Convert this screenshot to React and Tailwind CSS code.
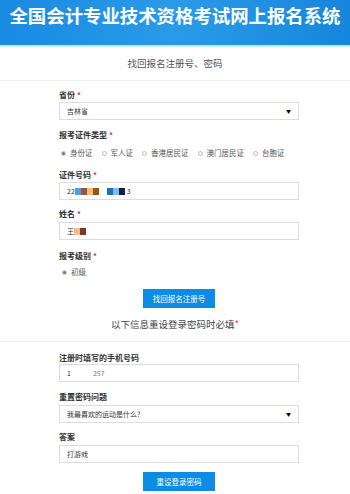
import React from "react";

const font = { fontFamily: '"Noto Sans CJK SC", "Noto Sans", sans-serif' };

function Label({ children, required, className = "" }) {
  return (
    <div className={`text-[8px] leading-[10px] font-bold text-[#333] ${className}`}>
      {children}
      {required && <span className="text-red-500 ml-[2px]">*</span>}
    </div>
  );
}

function Field({ children, className = "" }) {
  return (
    <div
      className={`h-[18px] border border-[#dcdcdc] bg-white flex items-center px-[7px] text-[7px] text-[#333] whitespace-nowrap ${className}`}
    >
      {children}
    </div>
  );
}

function Select({ value, className = "" }) {
  return (
    <Field className={`justify-between ${className}`}>
      <span>{value}</span>
      <span className="text-[5px] text-black">▼</span>
    </Field>
  );
}

function Radio({ label, checked }) {
  return (
    <label className="flex items-center gap-[4px] text-[7.5px] leading-[10px] text-[#555] whitespace-nowrap shrink-0">
      <span className="w-[5px] h-[5px] rounded-full border border-[#bbb] flex items-center justify-center">
        {checked && <span className="w-[3px] h-[3px] rounded-full bg-[#777]" />}
      </span>
      {label}
    </label>
  );
}

function Block({ c }) {
  return <span className="inline-block w-[6px] h-[7px]" style={{ background: c }} />;
}

export default function App() {
  return (
    <div className="w-[350px] h-[494px] bg-white overflow-hidden" style={font}>
      <div className="h-[45px] bg-gradient-to-r from-[#1a8ae2] via-[#2a9ae8] to-[#1686dc] flex items-start justify-center pt-[4px]">
        <h1 className="text-white text-[18.4px] font-bold leading-[22px] whitespace-nowrap">
          全国会计专业技术资格考试网上报名系统
        </h1>
      </div>
      <div className="h-[2px] bg-[#cfe6f8]" />

      <div className="h-[34px] border-b border-[#eee] flex items-center justify-center text-[9.5px] text-[#555]">
        找回报名注册号、密码
      </div>

      <div className="pl-[59px] pr-[51px] pt-[9px]">
        <Label required>省份</Label>
        <Select value="吉林省" className="mt-[2px]" />

        <Label required className="mt-[10px]">报考证件类型</Label>
        <div className="flex gap-[9px] mt-[8px] pl-[2px]">
          <Radio label="身份证" checked />
          <Radio label="军人证" />
          <Radio label="香港居民证" />
          <Radio label="澳门居民证" />
          <Radio label="台胞证" />
        </div>

        <Label required className="mt-[12px]">证件号码</Label>
        <Field className="mt-[2px]">
          <span>22</span>
          <Block c="#4ba3e3" />
          <Block c="#a0533a" />
          <Block c="#f5b97a" />
          <Block c="#a4500f" />
          <span className="w-[8px]" />
          <Block c="#1a70c7" />
          <Block c="#7cbcee" />
          <Block c="#0d2347" />
          <span className="ml-[2px]">3</span>
        </Field>

        <Label required className="mt-[9px]">姓名</Label>
        <Field className="mt-[3px]">
          <span>王</span>
          <Block c="#f5bd82" />
          <Block c="#7a3a2e" />
        </Field>

        <Label required className="mt-[11px]">报考级别</Label>
        <div className="mt-[6px] pl-[3px]">
          <Radio label="初级" checked />
        </div>

        <div className="flex justify-center mt-[12px] pr-[-8px]">
          <button className="w-[72px] h-[19px] bg-[#0e8ce4] text-white text-[7.5px]">
            找回报名注册号
          </button>
        </div>
      </div>

      <div className="h-[34px] border-b border-[#eee] flex items-center justify-center text-[9.5px] text-[#444]">
        以下信息重设登录密码时必填<span className="text-red-500">*</span>
      </div>

      <div className="pl-[59px] pr-[51px] pt-[11px]">
        <Label>注册时填写的手机号码</Label>
        <Field className="mt-[1px]">
          <span>1</span>
          <span className="ml-[22px] text-[#777]">257</span>
        </Field>

        <Label className="mt-[10px]">重置密码问题</Label>
        <Select value="我最喜欢的运动是什么?" className="mt-[3px]" />

        <Label className="mt-[9px]">答案</Label>
        <Field className="mt-[3px]">打游戏</Field>

        <div className="flex justify-center mt-[9px]">
          <button className="w-[72px] h-[19px] bg-[#0e8ce4] text-white text-[7.5px]">
            重设登录密码
          </button>
        </div>
      </div>
    </div>
  );
}
